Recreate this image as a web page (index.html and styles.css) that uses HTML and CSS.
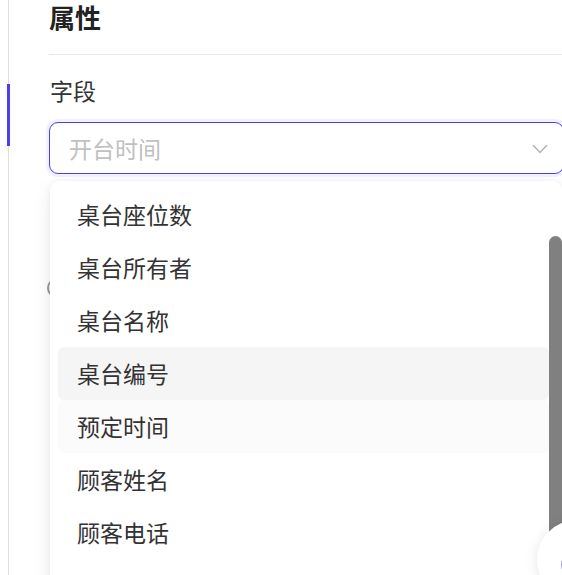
FILE: index.html
```html
<!DOCTYPE html>
<html lang="zh">
<head>
<meta charset="utf-8">
<link rel="stylesheet" href="styles.css">
</head>
<body>
<div class="rail">
  <div class="rail-mark"></div>
  <div class="panel">
    <h2 class="title">属性</h2>
    <div class="field">
      <div class="label">字段</div>
      <div class="select-wrap">
        <div class="select">
          <span class="placeholder">开台时间</span>
          <svg class="chevron" width="16" height="10" viewBox="0 0 16 10"><path d="M1 1 L8 8.5 L15 1" fill="none" stroke="#b0b0b0" stroke-width="1.3"/></svg>
        </div>
        <div class="under-row"><span class="radio"></span></div>
        <div class="dropdown">
          <ul class="options">
            <li class="option">桌台座位数</li>
            <li class="option">桌台所有者</li>
            <li class="option">桌台名称</li>
            <li class="option hover">桌台编号</li>
            <li class="option soft">预定时间</li>
            <li class="option">顾客姓名</li>
            <li class="option">顾客电话</li>
          </ul>
          <div class="scrollbar"><div class="thumb"></div></div>
        </div>
      </div>
    </div>
  </div>
</div>
<div class="fab"><span class="fab-dot"></span></div>
</body>
</html>
```
FILE: styles.css
```css
html, body {
  margin: 0;
  padding: 0;
  height: 100%;
  overflow: hidden;
  background: #fff;
  font-family: "Noto Sans CJK SC", "Noto Sans", sans-serif;
  color: #333;
}
.rail {
  position: relative;
  margin-left: 8px;
  border-left: 1px solid #dedede;
  height: 100%;
  box-sizing: border-box;
}
.rail-mark {
  position: absolute;
  left: -2px;
  top: 84px;
  width: 3px;
  height: 62px;
  background: #4a3df2;
}
.panel {
  padding-left: 40px;
  width: 515px;
}
.title {
  margin: 0;
  font-size: 26px;
  line-height: 34px;
  font-weight: 700;
  color: #222;
  padding-bottom: 20px;
  border-bottom: 1px solid #e9e9e9;
}
.field {
  padding-top: 19px;
}
.label {
  font-size: 23px;
  line-height: 32px;
  color: #333;
  padding-left: 1px;
  margin-bottom: 16px;
}
.select-wrap {
  position: relative;
}
.select {
  height: 52px;
  box-sizing: border-box;
  border: 1px solid #4a3ff5;
  border-radius: 9px;
  box-shadow: 0 0 0 3px rgba(90, 80, 255, 0.08);
  display: flex;
  align-items: center;
  justify-content: space-between;
  padding: 0 15px 0 19px;
  background: #fff;
}
.placeholder {
  font-size: 23px;
  color: #c0c0c0;
}
.chevron {
  margin-top: 2px;
}
.under-row {
  height: 60px;
  display: flex;
  align-items: center;
  padding-top: 84px;
}
.radio {
  width: 16px;
  height: 16px;
  border: 2px solid #999;
  border-radius: 50%;
  margin-left: -2px;
}
.dropdown {
  position: absolute;
  top: 59px;
  left: 1px;
  right: 2px;
  height: 420px;
  background: #fff;
  border-radius: 10px;
  box-shadow: 0 6px 18px rgba(0, 0, 0, 0.09), 0 0 6px rgba(0, 0, 0, 0.04);
  display: flex;
}
.options {
  list-style: none;
  margin: 0;
  padding: 7px 0 0 8px;
  flex: 1;
}
.option {
  height: 53px;
  line-height: 53px;
  padding-left: 19px;
  font-size: 23px;
  color: #333;
  border-radius: 6px;
}
.option.hover {
  background: #f5f5f5;
}
.option.soft {
  background: #fbfbfb;
}
.scrollbar {
  width: 13px;
  padding-top: 55px;
  flex: none;
}
.thumb {
  height: 400px;
  background: #808080;
  border-radius: 7px 7px 0 0;
}
.fab {
  position: fixed;
  left: 537px;
  top: 520px;
  width: 80px;
  height: 80px;
  border-radius: 50%;
  background: #fff;
  box-shadow: 0 2px 14px rgba(0, 0, 0, 0.1);
}
.fab-dot {
  position: absolute;
  left: 24px;
  top: 34px;
  width: 14px;
  height: 18px;
  border: 2px solid #9b9cf7;
  border-radius: 50%;
}
```
